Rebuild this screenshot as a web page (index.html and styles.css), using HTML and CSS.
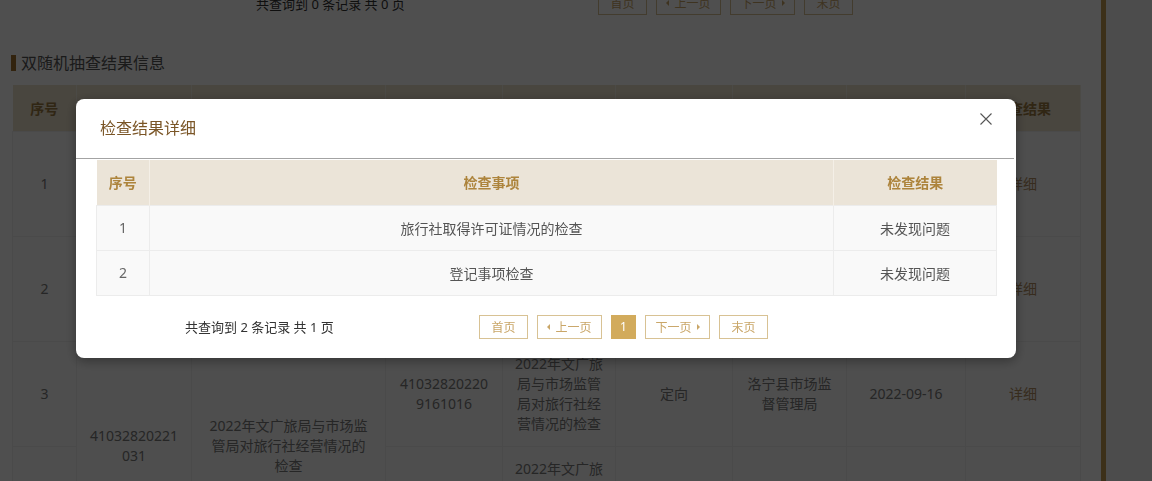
FILE: index.html
```html
<!DOCTYPE html>
<html lang="zh-CN">
<head>
<meta charset="utf-8">
<title>双随机抽查结果信息</title>
<link rel="stylesheet" href="styles.css">
</head>
<body>
<div class="page">
  <div class="main">
    <div class="pager-row top">
      <div class="total wide">共查询到 0 条记录 共 0 页</div>
      <div class="pager">
        <span class="pbtn w49">首页</span>
        <span class="pbtn w65"><i class="tri left"></i>上一页</span>
        <span class="pbtn w65">下一页<i class="tri right"></i></span>
        <span class="pbtn w49">末页</span>
      </div>
    </div>

    <h2 class="sec-title">双随机抽查结果信息</h2>

    <table class="bg-table">
      <colgroup>
        <col style="width:64px"><col style="width:115px"><col style="width:194px"><col style="width:117px"><col style="width:113px"><col style="width:117px"><col style="width:114px"><col style="width:119px"><col style="width:115px">
      </colgroup>
      <thead>
        <tr><th>序号</th><th>任务编号</th><th>任务名称</th><th>检查编号</th><th>检查事项</th><th>抽查类型</th><th>检查机关</th><th>检查日期</th><th>检查结果</th></tr>
      </thead>
      <tbody>
        <tr>
          <td>1</td><td>41032820221031</td><td class="name">2022年文广旅局与市场监管局对旅行社经营情况的检查</td><td class="code">410328202209161016</td><td>2022年文广旅局与市场监管局对旅行社经营情况的检查</td><td>定向</td><td>洛宁县市场监督管理局</td><td>2022-09-16</td><td><span class="link">详细</span></td>
        </tr>
        <tr>
          <td>2</td><td>41032820221031</td><td class="name">2022年文广旅局与市场监管局对旅行社经营情况的检查</td><td class="code">410328202209161015</td><td>2022年文广旅局与市场监管局对旅行社经营情况的检查</td><td>定向</td><td>洛宁县市场监督管理局</td><td>2022-09-16</td><td><span class="link">详细</span></td>
        </tr>
        <tr>
          <td>3</td><td rowspan="2">41032820221031</td><td rowspan="2" class="name">2022年文广旅局与市场监管局对旅行社经营情况的检查</td><td class="code">410328202209161016</td><td>2022年文广旅局与市场监管局对旅行社经营情况的检查</td><td>定向</td><td>洛宁县市场监督管理局</td><td>2022-09-16</td><td><span class="link">详细</span></td>
        </tr>
        <tr>
          <td>4</td><td class="code">410328202209161017</td><td>2022年文广旅局与市场监管局对旅行社经营情况的检查</td><td>定向</td><td>洛宁县市场监督管理局</td><td>2022-09-16</td><td><span class="link">详细</span></td>
        </tr>
      </tbody>
    </table>
  </div>
  <div class="rail"></div>
  <div class="side"></div>
</div>

<div class="overlay"></div>

<div class="modal" role="dialog">
  <div class="modal-head">
    <span class="modal-title">检查结果详细</span>
    <span class="close">
      <svg width="12" height="12" viewBox="0 0 12 12"><path d="M0.5 0.5 L11.5 11.5 M11.5 0.5 L0.5 11.5" stroke="#555" stroke-width="1.1" fill="none"/></svg>
    </span>
  </div>
  <div class="modal-body">
    <table class="detail">
      <colgroup><col style="width:53px"><col style="width:684px"><col style="width:163px"></colgroup>
      <thead><tr><th>序号</th><th>检查事项</th><th>检查结果</th></tr></thead>
      <tbody>
        <tr><td class="num">1</td><td>旅行社取得许可证情况的检查</td><td>未发现问题</td></tr>
        <tr><td class="num">2</td><td>登记事项检查</td><td>未发现问题</td></tr>
      </tbody>
    </table>
    <div class="pager-row foot">
      <div class="total">共查询到 2 条记录 共 1 页</div>
      <div class="pager">
        <span class="pbtn w49">首页</span>
        <span class="pbtn w65"><i class="tri left"></i>上一页</span>
        <span class="pbtn cur">1</span>
        <span class="pbtn w65">下一页<i class="tri right"></i></span>
        <span class="pbtn w49">末页</span>
      </div>
    </div>
  </div>
</div>
</body>
</html>
```

FILE: styles.css
```css
* { box-sizing: border-box; }

html, body {
  margin: 0;
  padding: 0;
  height: 100%;
  overflow: hidden;
}

body {
  font-family: "Noto Sans", "Noto Sans CJK SC", sans-serif;
  font-size: 14px;
  color: #333;
  background: #fff;
}

.page {
  display: flex;
  min-height: 100%;
}

.main {
  width: 1101px;
  flex: none;
  padding: 0 21px 0 12px;
  background: #fff;
}

.rail {
  width: 5px;
  flex: none;
  background: #c29c50;
}

.side {
  flex: 1;
  background: #f6f6f6;
}

/* pager */
.pager-row {
  display: flex;
  align-items: center;
}

.pager-row.top {
  margin-top: -9px;
  height: 24px;
  padding-left: 244px;
}

.total {
  font-size: 13px;
  color: #333;
  width: 294px;
  flex: none;
}

.total.wide { width: 342px; }

.pager {
  display: flex;
  gap: 9px;
}

.pbtn {
  display: inline-flex;
  align-items: center;
  justify-content: center;
  height: 24px;
  border: 1px solid #d8c294;
  color: #c9a668;
  font-size: 12px;
  background: #fff;
  padding: 0;
}

.pbtn.w49 { width: 49px; }
.pbtn.w65 { width: 65px; }

.pbtn.cur {
  width: 25px;
  background: #d2ab5c;
  border-color: #d2ab5c;
  color: #fff;
}

.tri {
  display: inline-block;
  width: 0;
  height: 0;
  border-top: 3px solid transparent;
  border-bottom: 3px solid transparent;
}

.tri.left { border-right: 3px solid #c9a668; margin-right: 5px; }
.tri.right { border-left: 3px solid #c9a668; margin-left: 5px; }

/* section title */
.sec-title {
  margin: 37px 0 11px 0;
  font-size: 16px;
  font-weight: normal;
  line-height: 22px;
  color: #555;
  display: flex;
  align-items: center;
}

.sec-title::before {
  content: "";
  width: 5px;
  height: 16px;
  background: #a0702e;
  margin-right: 5px;
  margin-left: -1px;
}

/* background table */
.bg-table {
  border-collapse: collapse;
  table-layout: fixed;
  width: 1068px;
}

.bg-table th {
  height: 46px;
  background: #ebe0cb;
  color: #9c7a40;
  font-weight: bold;
  font-size: 14px;
  border-right: 1px solid #f3ede2;
}

.bg-table td {
  height: 105px;
  padding: 0 10px;
  text-align: center;
  vertical-align: middle;
  line-height: 20px;
  color: #7a7a7a;
  background: #fafafa;
  border: 1px solid #efefef;
  word-break: break-all;
}

.bg-table td.name { padding: 0 14px; }
.bg-table td.code { padding: 0 12px; }

.link { color: #b08e62; }

/* overlay + modal */
.overlay {
  position: fixed;
  inset: 0;
  background: rgba(0, 0, 0, 0.69);
}

.modal {
  position: fixed;
  left: 76px;
  top: 99px;
  width: 940px;
  height: 259px;
  background: #fff;
  border-radius: 8px;
  box-shadow: 0 3px 12px rgba(0, 0, 0, 0.35);
}

.modal-head {
  position: relative;
  height: 60px;
  padding: 0 0 4px 24px;
  display: flex;
  align-items: center;
  border-bottom: 1px solid #a3a3a3;
  margin-right: 2px;
}

.modal-title {
  font-size: 16px;
  color: #7a5526;
}

.close {
  position: absolute;
  top: 14px;
  right: 22px;
  width: 12px;
  height: 12px;
  display: block;
}

.close svg { display: block; }

.modal-body {
  padding: 1px 20px 20px 20px;
}

.detail {
  width: 900px;
  border-collapse: collapse;
  table-layout: fixed;
}

.detail th {
  height: 45px;
  background: #ebe4d8;
  color: #ad843c;
  font-weight: bold;
  font-size: 14px;
  text-align: center;
  border-right: 1px solid #f4efe7;
}

.detail th:last-child { border-right: none; }

.detail td {
  height: 45px;
  background: #f9f9f9;
  color: #555;
  text-align: center;
  border: 1px solid #ececec;
  font-size: 14px;
}

.detail td.num { color: #666; }

.pager-row.foot {
  margin-top: 19px;
  padding-left: 89px;
}
```
